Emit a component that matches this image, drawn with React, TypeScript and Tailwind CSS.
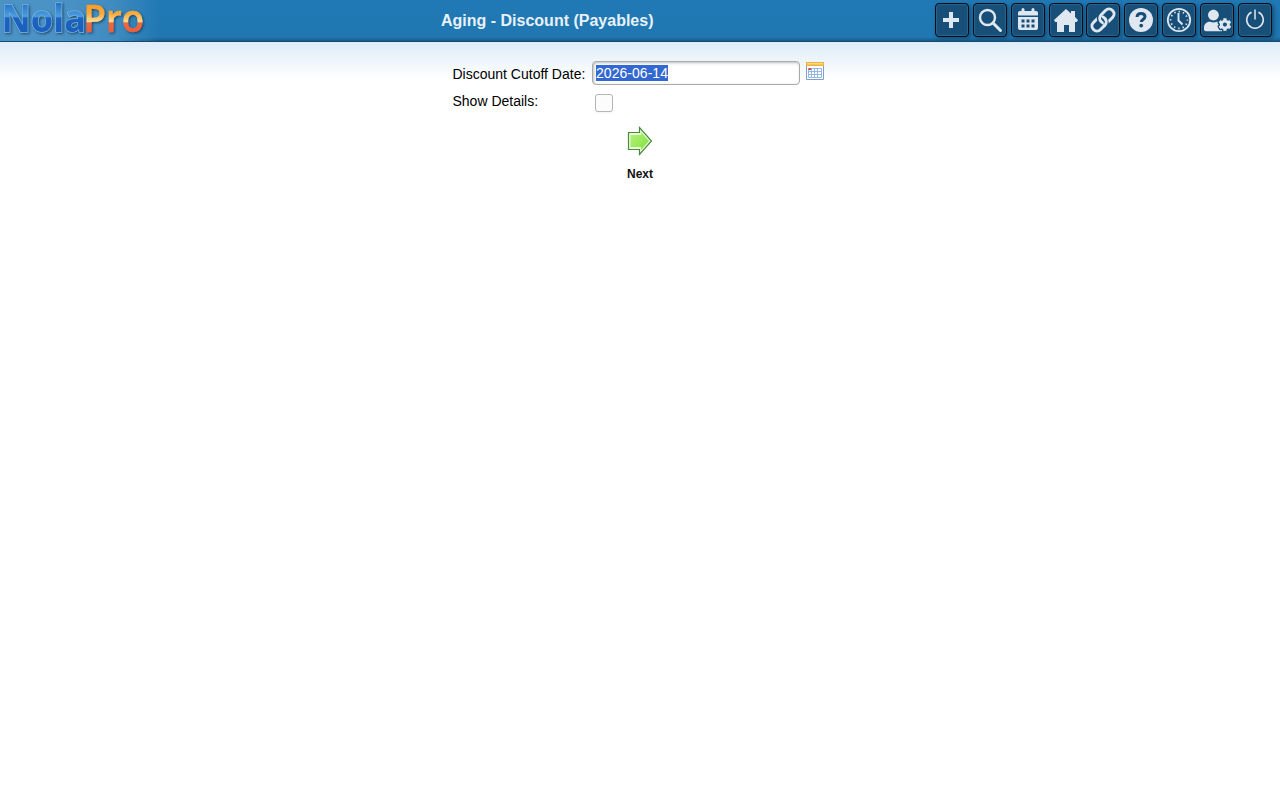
import React from "react";
import { FaUserCog } from "react-icons/fa";

function Logo() {
  return (
    <svg width="160" height="41" viewBox="0 0 160 41" className="block shrink-0 overflow-visible" role="img">
      <defs>
        <linearGradient id="nola" x1="0" y1="4" x2="0" y2="32" gradientUnits="userSpaceOnUse">
          <stop offset="0" stopColor="#2673c6" />
          <stop offset="0.36" stopColor="#4596da" />
          <stop offset="0.44" stopColor="#4f9fde" />
          <stop offset="0.5" stopColor="#1c62c0" />
          <stop offset="1" stopColor="#1d60be" />
        </linearGradient>
        <linearGradient id="pro" x1="0" y1="4" x2="0" y2="32" gradientUnits="userSpaceOnUse">
          <stop offset="0" stopColor="#fb9a20" />
          <stop offset="0.35" stopColor="#fbab3a" />
          <stop offset="0.64" stopColor="#fcdc98" />
          <stop offset="0.67" stopColor="#ee6a3c" />
          <stop offset="1" stopColor="#e9603a" />
        </linearGradient>
        <filter id="logoShadow" x="-10%" y="-20%" width="120%" height="150%">
          <feDropShadow dx="1.2" dy="1.2" stdDeviation="0.8" floodColor="#12314f" floodOpacity="0.75" />
        </filter>
      </defs>
      <g filter="url(#logoShadow)" fontFamily="'Open Sans', 'Noto Sans', sans-serif" fontSize="37">
        <text x="1.500" y="31.500" fontWeight="700" textLength="84.500" lengthAdjust="spacingAndGlyphs" fill="url(#nola)" stroke="#78b4e0" strokeWidth="1.400" paintOrder="stroke">Nola</text>
        <text x="83.500" y="31.500" fontWeight="600" textLength="60.500" lengthAdjust="spacingAndGlyphs" fill="url(#pro)" stroke="url(#pro)" strokeWidth="0.500">Pro</text>
      </g>
    </svg>
  );
}

const iconColor = "#dfe8f0";

function PlusIcon() {
  return (
    <svg width="16" height="16" viewBox="0 0 16 16" fill={iconColor} className="mr-px mb-px">
      <path d="M6 0h4v6h6v4h-6v6H6v-6H0V6h6z" />
    </svg>
  );
}

function SearchIcon() {
  return (
    <svg width="26" height="26" viewBox="0 0 26 26" fill="none" stroke={iconColor}>
      <circle cx="10.500" cy="10.500" r="7.500" strokeWidth="2.400" />
      <path d="M16 16l7.500 7.500" strokeWidth="3" strokeLinecap="round" />
    </svg>
  );
}

function CalendarIcon() {
  return (
    <svg width="22" height="24" viewBox="0 0 22 24" fill={iconColor}>
      <path d="M4.500 1.500q0-1.500 1.500-1.500t1.500 1.500V3h7V1.500q0-1.500 1.500-1.500t1.500 1.500V3H19q2 0 2 2v2.500H1V5q0-2 2-2h1.500z" />
      <path fillRule="evenodd" d="M1 9h20V20q0 2-2 2H3q-2 0-2-2zM4.500 11.500v3h3v-3zM9.500 11.500v3h3v-3zM14.500 11.500v3h3v-3zM4.500 16.500v3h3v-3zM9.500 16.500v3h3v-3zM14.500 16.500v3h3v-3z" />
    </svg>
  );
}

function HomeIcon() {
  return (
    <svg width="26" height="26" viewBox="0 0 26 26" fill={iconColor}>
      <path d="M13 2l5 4.500V4h4v6l3 3-1.200 2H22v10h-6v-7h-5v7H4V15H2.200L1 13z" />
    </svg>
  );
}

function LinkIcon() {
  return (
    <svg width="26" height="26" viewBox="0 0 26 26" fill="none" stroke={iconColor} strokeWidth="3">
      <g transform="rotate(-45 13 13)">
        <rect x="-0.500" y="8" width="16" height="10" rx="5" />
        <path d="M14 8h-1a5 5 0 0 0-2.500 4" stroke="#174f79" strokeWidth="5" />
        <rect x="10.500" y="8" width="16" height="10" rx="5" />
        <path d="M12.200 18.200a5 5 0 0 0 2.300-3" stroke="#174f79" strokeWidth="5" />
        <path d="M9 18h1.500a5 5 0 0 0 5-5" />
      </g>
    </svg>
  );
}

function HelpIcon() {
  return (
    <svg width="26" height="26" viewBox="0 0 26 26">
      <circle cx="13" cy="13" r="12" fill={iconColor} />
      <path d="M9 10c.2-2.400 1.800-3.600 4-3.600 2.400 0 4 1.200 4 3.200 0 3-3.700 2.700-3.700 5.400" fill="none" stroke="#174d76" strokeWidth="3" />
      <circle cx="13.200" cy="18.600" r="1.900" fill="#174d76" />
    </svg>
  );
}

function ClockIcon() {
  return (
    <svg width="26" height="26" viewBox="0 0 26 26" fill="none" stroke={iconColor}>
      <circle cx="13" cy="13" r="11.200" strokeWidth="1.800" />
      <circle cx="13" cy="13" r="8.400" strokeWidth="1.700" strokeDasharray="1.400 2.998" strokeDashoffset="0.700" />
      <path d="M12.500 6v7.500l4 4" strokeWidth="1.900" />
    </svg>
  );
}

function PowerIcon() {
  return (
    <svg width="22" height="22" viewBox="0 0 22 22" fill="none" stroke={iconColor} strokeWidth="1.500">
      <path d="M7.500 3.300a8.300 8.300 0 1 0 7 0M11 .5v10" />
    </svg>
  );
}

function DateIcon() {
  return (
    <svg width="18" height="18" viewBox="0 0 18 18">
      <path d="M.5.500h17v17H.500z" fill="#fff" stroke="#7f9fca" />
      <path d="M0 0h18v4H0z" fill="#eeb33c" />
      <path d="M1 1h16v1.500H1z" fill="#fbdc80" />
      <path d="M2.500 6.500h13v9h-13zM5.500 6v10M8.500 6v10M11.500 6v10M2 9.500h14M2 12.500h14" fill="none" stroke="#94b7e4" />
      <path d="M2.500 6H5v2H2.500z" fill="#df4434" />
    </svg>
  );
}

function NextArrow() {
  return (
    <svg width="26" height="30" viewBox="0 0 26 30">
      <defs>
        <linearGradient id="arrow" x1="0" y1="0" x2="1" y2="1">
          <stop offset="0" stopColor="#b9f080" />
          <stop offset="0.5" stopColor="#9bea5c" />
          <stop offset="1" stopColor="#76e33c" />
        </linearGradient>
      </defs>
      <path d="M1.500 6.500H12.500V1.500L24.500 15 12.500 28.500v-5H1.500z" fill="#ecfadd" stroke="#4b8b38" strokeWidth="1.200" />
      <path d="M3.500 9h10.500V6L22 15l-8 9v-3H3.500z" fill="url(#arrow)" />
    </svg>
  );
}

const tools: { label: string; icon: React.ReactNode }[] = [
  { label: "Add", icon: <PlusIcon /> },
  { label: "Search", icon: <SearchIcon /> },
  { label: "Calendar", icon: <CalendarIcon /> },
  { label: "Home", icon: <HomeIcon /> },
  { label: "Links", icon: <LinkIcon /> },
  { label: "Help", icon: <HelpIcon /> },
  { label: "Time clock", icon: <ClockIcon /> },
  { label: "Account", icon: <FaUserCog size={27} color={iconColor} className="ml-px" /> },
  { label: "Log out", icon: <PowerIcon /> },
];

export default function App() {
  return (
    <div className="flex h-[800px] w-full flex-col bg-white font-['Liberation_Sans',Arial,sans-serif] text-black">
      <header className="grid h-[42px] shrink-0 grid-cols-[441px_1fr_auto] bg-[linear-gradient(to_bottom,#2079b5_0px,#2077b1_37px,#1a6496_40px,#124569_42px)]">
        <div className="h-[41px] w-[160px] bg-[linear-gradient(to_right,#4b92c5_0px,#4b92c5_60px,#3f8bc0_115px,#2079b500_160px)]">
          <Logo />
        </div>
        <h1 className="pt-[10px] text-[16px] leading-[22px] font-bold text-[#e9f1f8]">Aging - Discount (Payables)</h1>
        <nav className="flex gap-[3.9px] pt-[3px] pr-[8px]">
          {tools.map((t) => (
            <button
              key={t.label}
              aria-label={t.label}
              className="flex h-[34px] w-[34px] items-center justify-center rounded-[4px] border border-[#020d18] bg-[#174f79] shadow-[inset_0_0_1px_1px_#2b648b,2px_2px_4px_#124e7a]"
            >
              {t.icon}
            </button>
          ))}
        </nav>
      </header>
      <main className="flex flex-1 flex-col items-center bg-[linear-gradient(to_bottom,#deecf7_0px,#ffffff_38px)] pt-[19px]">
        <form className="grid w-[376px] grid-cols-[140px_208px_1fr] text-[14px]">
          <label htmlFor="cutoff" className="pt-[4px] pl-[0.5px] leading-[18px]">Discount Cutoff Date:</label>
          <div
            id="cutoff"
            className="flex h-[24px] items-center rounded-[4px] border border-[#aaa] bg-white pl-[3px] shadow-[inset_1px_1px_3px_#bbb]"
          >
            <span className="bg-[#3367d1] leading-[16px] tracking-[0.04px] text-white">2026-06-14</span>
          </div>
          <div className="pt-px pl-[6px]"><DateIcon /></div>
          <label className="pt-[7px] pl-[0.5px] leading-[18px]">Show Details:</label>
          <div className="pt-[9px] pl-[3px]">
            <div className="h-[18px] w-[18px] rounded-[3px] border border-[#b5b5b5] bg-[#fcfcfc] shadow-[0_1px_2px_#0000000d]" />
          </div>
        </form>
        <button className="mt-[14px] flex flex-col items-center">
          <NextArrow />
          <span className="mt-[10px] text-[12px] leading-[16px] font-bold text-[#111]">Next</span>
        </button>
      </main>
    </div>
  );
}
